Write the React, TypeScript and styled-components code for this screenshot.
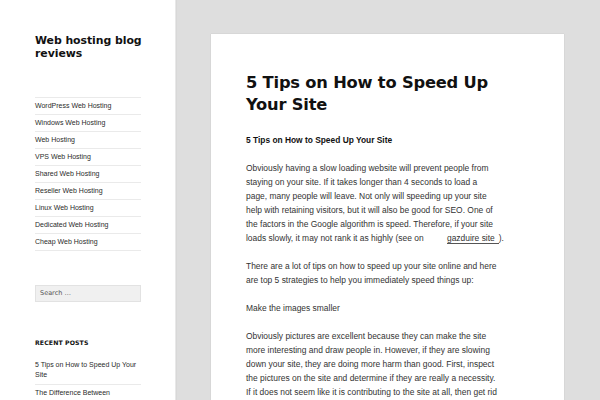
import React from "react";
import styled, { createGlobalStyle } from "styled-components";

const Global = createGlobalStyle`
  html, body { margin: 0; padding: 0; }
  body {
    background: #dedede;
    width: 600px;
    height: 400px;
    overflow: hidden;
    font-family: "Liberation Sans", Arial, sans-serif;
    color: #333;
  }
`;

const Page = styled.div`
  display: flex;
  align-items: flex-start;
  width: 600px;
  height: 400px;
  overflow: hidden;
`;

const Sidebar = styled.aside`
  width: 176px;
  height: 400px;
  flex-shrink: 0;
  background: #fff;
  box-shadow: 0 0 1px rgba(0, 0, 0, 0.15);
  border-right: 1px solid #e8e8e8;
  box-sizing: border-box;
  padding: 34px 35px 0 35px;
`;

const SiteTitle = styled.h1`
  margin: 0;
  width: 112px;
  font-family: "DejaVu Sans", sans-serif;
  font-weight: bold;
  font-size: 10.9px;
  line-height: 13px;
  letter-spacing: -0.05px;
  color: #111;
`;

const Menu = styled.ul`
  list-style: none;
  margin: 37px 0 0 0;
  padding: 0;
  width: 106px;
  border-top: 1px solid #eaeaea;
`;

const MenuItem = styled.li`
  height: 16px;
  border-bottom: 1px solid #eaeaea;
  font-size: 7px;
  line-height: 16px;
  color: #2b2b2b;
  white-space: nowrap;
`;

const SearchBox = styled.div`
  margin-top: 34px;
  width: 106px;
  height: 17px;
  box-sizing: border-box;
  background: #f0f0f0;
  border: 1px solid #e2e2e2;
  font-family: "DejaVu Sans", sans-serif;
  font-size: 6.5px;
  line-height: 15px;
  padding-left: 4px;
  color: #555;
`;

const WidgetTitle = styled.h2`
  margin: 36px 0 0 0;
  font-family: "DejaVu Sans", sans-serif;
  font-weight: bold;
  font-size: 6.2px;
  line-height: 10px;
  letter-spacing: 0.1px;
  text-transform: uppercase;
  color: #111;
`;

const PostList = styled.ul`
  list-style: none;
  margin: 9px 0 0 0;
  padding: 0;
  width: 106px;
`;

const PostItem = styled.li`
  padding: 3px 0 4px 0;
  border-bottom: 1px solid #eaeaea;
  font-size: 7px;
  line-height: 10px;
  color: #2b2b2b;
`;

const Main = styled.main`
  flex: 1;
  padding: 34px 36px 0 35px;
`;

const Card = styled.article`
  width: 353px;
  min-height: 400px;
  background: #fff;
  box-shadow: 0 0 1px rgba(0, 0, 0, 0.2);
  box-sizing: border-box;
  padding: 38px 0 0 35px;
`;

const Content = styled.div`
  width: 251px;
`;

const Title = styled.h1`
  margin: 0;
  width: 260px;
  font-family: "DejaVu Sans", sans-serif;
  font-weight: bold;
  font-size: 16.3px;
  line-height: 21.5px;
  letter-spacing: -0.2px;
  color: #111;
`;

const SubHeading = styled.p`
  margin: 18px 0 0 0;
  font-weight: bold;
  font-size: 8.4px;
  line-height: 14px;
  color: #111;
`;

const Para = styled.p`
  margin: 14px 0 0 0;
  font-size: 8.45px;
  line-height: 14px;
  color: #333;
`;

const LinkGroup = styled.span`
  display: inline-block;
  width: 60px;
  white-space: nowrap;
  overflow: visible;
`;

const Link = styled.a`
  color: #333;
  text-decoration: none;
  border-bottom: 1px solid #555;
  margin-left: 21px;
  padding-right: 4px;
`;

const menu = [
  "WordPress Web Hosting",
  "Windows Web Hosting",
  "Web Hosting",
  "VPS Web Hosting",
  "Shared Web Hosting",
  "Reseller Web Hosting",
  "Linux Web Hosting",
  "Dedicated Web Hosting",
  "Cheap Web Hosting",
];

export default function App() {
  return (
    <>
      <Global />
      <Page>
        <Sidebar>
          <SiteTitle>Web hosting blog reviews</SiteTitle>
          <Menu>
            {menu.map((m) => (
              <MenuItem key={m}>{m}</MenuItem>
            ))}
          </Menu>
          <SearchBox>Search …</SearchBox>
          <WidgetTitle>Recent Posts</WidgetTitle>
          <PostList>
            <PostItem>5 Tips on How to Speed Up Your Site</PostItem>
            <PostItem>The Difference Between Managed and Unmanaged</PostItem>
          </PostList>
        </Sidebar>
        <Main>
          <Card>
            <Content>
              <Title>5 Tips on How to Speed Up Your Site</Title>
              <SubHeading>5 Tips on How to Speed Up Your Site</SubHeading>
              <Para>
                Obviously having a slow loading website will prevent people from staying on your
                site. If it takes longer than 4 seconds to load a page, many people will leave. Not
                only will speeding up your site help with retaining visitors, but it will also be
                good for SEO. One of the factors in the Google algorithm is speed. Therefore, if
                your site loads slowly, it may not rank it as highly (see on{" "}
                <LinkGroup>
                  <Link href="#">gazduire site</Link>).
                </LinkGroup>
              </Para>
              <Para>
                There are a lot of tips on how to speed up your site online and here are top 5
                strategies to help you immediately speed things up:
              </Para>
              <Para>Make the images smaller</Para>
              <Para>
                Obviously pictures are excellent because they can make the site more interesting
                and draw people in. However, if they are slowing down your site, they are doing
                more harm than good. First, inspect the pictures on the site and determine if they
                are really a necessity. If it does not seem like it is contributing to the site at
                all, then get rid of it.
              </Para>
            </Content>
          </Card>
        </Main>
      </Page>
    </>
  );
}
